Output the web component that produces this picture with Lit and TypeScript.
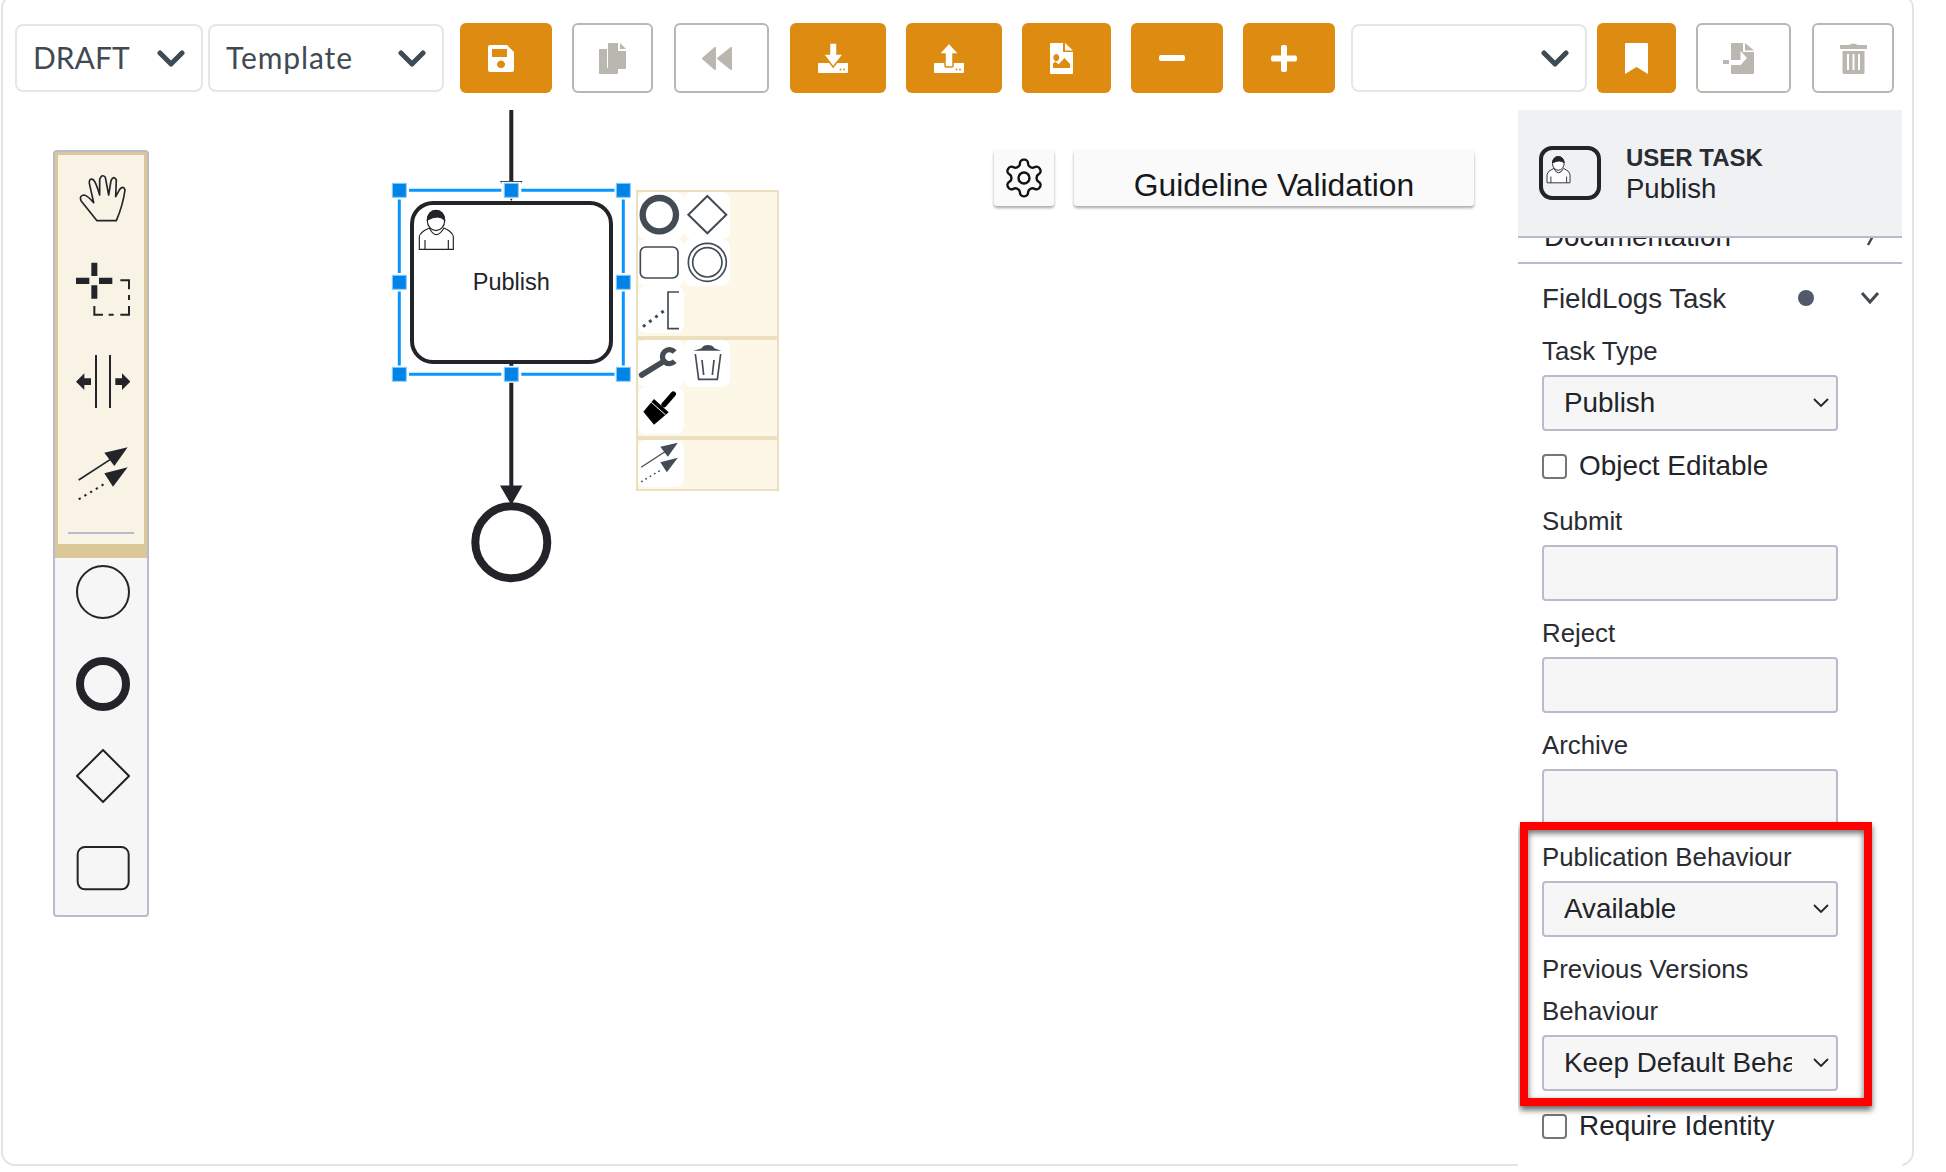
import { LitElement, html, svg, css } from 'lit';
import { customElement } from 'lit/decorators.js';

const userIcon = (sw: number) => svg`
  <g fill="none" stroke="#22242a" stroke-width=${sw}>
    <path fill="#fff" d="M118 448V410Q120 396 148 384Q168 424 192 384Q218 396 220 410V448Z" />
    <path d="M135 448V420M205 448V420" />
    <ellipse fill="#fff" cx="168" cy="362" rx="26" ry="30" />
    <path fill="#22242a" d="M142 360Q144 332 168 331Q192 332 194 360Q176 342 142 360Z" />
  </g>`;

const connectIcon = svg`
  <path d="M115 1020L215 955" stroke="currentColor" stroke-width="5" fill="none" />
  <path d="M262 922L192 938L222 978Z" fill="currentColor" />
  <path d="M115 1078L195 1030" stroke="currentColor" stroke-width="6" stroke-dasharray="7 13" fill="none" />
  <path d="M262 982L192 1000L218 1040Z" fill="currentColor" />`;

const chevron = html`<svg class="chev" width="28" height="18" viewBox="0 0 28 18"><path d="M3 3L14 14L25 3" /></svg>`;
const smallChev = html`<svg class="small-chev" width="16" height="10" viewBox="0 0 16 10"><path d="M1 1L8 8L15 1" /></svg>`;

const tray = svg`<path d="M1 20H30V29a1 1 0 0 1-1 1H1a1 1 0 0 1-1-1V21a1 1 0 0 1 1-1Z" /><circle cx="22.5" cy="26.5" r="1" class="hole" /><circle cx="26" cy="26.5" r="1" class="hole" />`;

const toolbarIcons: Record<string, unknown> = {
  save: html`<svg width="26" height="27" viewBox="0 0 26 27"><path fill-rule="evenodd" d="M2 0H19L26 7V25a2 2 0 0 1-2 2H2a2 2 0 0 1-2-2V2a2 2 0 0 1 2-2ZM4 4V12H19V4ZM13 15.5a4 3.8 0 1 0 .01 0Z" /></svg>`,
  copy: html`<svg width="27" height="31" viewBox="0 0 27 31"><path d="M1 6H8V24a1 1 0 0 0 1 1H19V30a1 1 0 0 1-1 1H1a1 1 0 0 1-1-1V7a1 1 0 0 1 1-1Z" /><path d="M10 0H19V8H27V25a1 1 0 0 1-1 1H10a1 1 0 0 1-1-1V1a1 1 0 0 1 1-1Z" /><path d="M21 0L27 6H21Z" /></svg>`,
  rewind: html`<svg width="30" height="23" viewBox="0 0 30 23"><path stroke-linejoin="round" stroke-width="2" stroke="currentColor" d="M1 11.5L13 1V22Z" /><path stroke-linejoin="round" stroke-width="2" stroke="currentColor" d="M16 11.5L29 1V22Z" /></svg>`,
  download: html`<svg width="30" height="30" viewBox="0 0 30 30">${tray}<path class="cut" d="M12 0H18.5a.5.5 0 0 1 .5.5V11H25.5L15.2 24L5.2 11H11.5V.5a.5.5 0 0 1 .5-.5Z" /></svg>`,
  upload: html`<svg width="30" height="30" viewBox="0 0 30 30">${tray}<path class="cut" d="M15 0L25 11H19V23a1 1 0 0 1-1 1H12a1 1 0 0 1-1-1V11H5Z" /></svg>`,
  image: html`<svg width="23" height="31" viewBox="0 0 23 31"><path fill-rule="evenodd" d="M1 0H13V9H23V30a1 1 0 0 1-1 1H1a1 1 0 0 1-1-1V1a1 1 0 0 1 1-1ZM6.3 11a3 3.6 0 1 0 .01 0ZM3 25V20.5L5.5 18.5L8.5 21.5L14.5 15L20 21V25Z" /><path d="M15 0L23 7.5H15Z" /></svg>`,
  minus: html`<svg width="26" height="6" viewBox="0 0 26 6"><rect width="26" height="6" rx="2" /></svg>`,
  plus: html`<svg width="26" height="27" viewBox="0 0 26 27"><rect y="10.5" width="26" height="6" rx="2" /><rect x="10" width="6" height="27" rx="2" /></svg>`,
  bookmark: html`<svg width="23" height="31" viewBox="0 0 23 31"><path d="M1 0H22a1 1 0 0 1 1 1V31L11.5 24L0 31V1a1 1 0 0 1 1-1Z" /></svg>`,
  import: html`<svg width="31" height="31" viewBox="0 0 31 31"><path fill-rule="evenodd" d="M9 0H20V9H31V30a1 1 0 0 1-1 1H9a1 1 0 0 1-1-1V22H17.5L24 15L17.5 8V17H8V1a1 1 0 0 1 1-1Z" /><path d="M22 0L31 7.5H22Z" /><path d="M0 17H6V21H0Z" /><path d="M8 17H17V21H8Z" fill="#fff" /></svg>`,
  trash: html`<svg width="27" height="31" viewBox="0 0 27 31"><path d="M9 2Q13 -1 18 2H27V6H0V2Z" /><path fill-rule="evenodd" d="M2.500 8H24.500V29.500a1.500 1.500 0 0 1-1.500 1.500H4a1.500 1.500 0 0 1-1.500-1.500ZM7 11V27H9V11ZM12.500 11V27H14.500V11ZM18 11V27H20V11Z" /></svg>`,
};

interface ToolItem {
  kind: 'select' | 'solid' | 'outline';
  width: number;
  gap: number;
  icon?: string;
  label?: string;
  nudge?: boolean;
}

const toolbar: ToolItem[] = [
  { kind: 'select', width: 188, gap: 15, label: 'DRAFT' },
  { kind: 'select', width: 236, gap: 5, label: 'Template' },
  { kind: 'solid', width: 92, gap: 16, icon: 'save', nudge: true },
  { kind: 'outline', width: 81, gap: 20, icon: 'copy' },
  { kind: 'outline', width: 95, gap: 21, icon: 'rewind', nudge: true },
  { kind: 'solid', width: 96, gap: 21, icon: 'download', nudge: true },
  { kind: 'solid', width: 96, gap: 20, icon: 'upload', nudge: true },
  { kind: 'solid', width: 89, gap: 20, icon: 'image', nudge: true },
  { kind: 'solid', width: 92, gap: 20, icon: 'minus', nudge: true },
  { kind: 'solid', width: 92, gap: 20, icon: 'plus', nudge: true },
  { kind: 'select', width: 236, gap: 16 },
  { kind: 'solid', width: 79, gap: 10, icon: 'bookmark' },
  { kind: 'outline', width: 95, gap: 20, icon: 'import', nudge: true },
  { kind: 'outline', width: 82, gap: 21, icon: 'trash' },
];

@customElement('app-root')
export class AppRoot extends LitElement {
  static styles = css`
    :host {
      display: block;
      width: 1946px;
      height: 1172px;
      overflow: hidden;
      background: #fff;
      font-family: 'Liberation Sans', Arial, sans-serif;
      color: #22242a;
    }
    .frame {
      box-sizing: border-box;
      width: 1913px;
      height: 1172px;
      margin: -6px 0 0 1px;
      border: 2px solid #e4e4e4;
      border-radius: 14px;
      display: flex;
      flex-direction: column;
    }
    .toolbar {
      height: 114px;
      display: flex;
      align-items: center;
      flex: none;
      padding-top: 10px;
      box-sizing: border-box;
      margin-left: -3px;
    }
    .tool-select {
      box-sizing: border-box;
      height: 68px;
      border: 2px solid #e6e6e6;
      border-radius: 8px;
      display: flex;
      align-items: center;
      justify-content: space-between;
      padding: 0 16px 0 16px;
      font-family: Lato, sans-serif;
      font-size: 30px;
      color: #3f4a52;
    }
    .tool-select span { padding-bottom: 2px; }
    .tool-select .tracked { letter-spacing: 0.9px; }
    .chev { margin-top: 2px; }
    .chev path {
      fill: none;
      stroke: #3f4a52;
      stroke-width: 5;
      stroke-linecap: round;
      stroke-linejoin: round;
    }
    .tool-btn {
      box-sizing: border-box;
      height: 70px;
      border-radius: 6px;
      display: flex;
      align-items: center;
      justify-content: center;
    }
    .tool-btn.nudge svg { margin-right: 10px; }
    .tool-btn.solid {
      background: #dd8b11;
      color: #fff;
    }
    .tool-btn.solid svg { fill: #fff; }
    .tool-btn.solid .hole { fill: #dd8b11; }
    .tool-btn.solid .cut { stroke: #dd8b11; stroke-width: 1.500; }
    .tool-btn.outline {
      border: 2px solid #bab7b0;
      color: #bab7b0;
      background: #fff;
    }
    .tool-btn.outline svg { fill: #bab7b0; }
    .main {
      flex: 1;
      display: flex;
      min-height: 0;
    }
    .canvas {
      position: relative;
      flex: 1;
    }
    .diagram {
      position: absolute;
      left: 0;
      top: 0;
    }
    .diagram-label {
      font-size: 23.500px;
      fill: #22242a;
    }
    .palette {
      position: absolute;
      left: 50px;
      top: 40px;
      box-sizing: border-box;
      width: 96px;
      border: 2px solid #b8bbcc;
      border-radius: 4px;
      background: #f6f6f6;
      color: #22242a;
    }
    .tools {
      background: #f9f3e6;
      border: solid #dcc896;
      border-width: 3px 3px 14px;
      padding-top: 15px;
      padding-bottom: 10px;
    }
    .shapes { padding: 7px 0 20px; }
    .entry {
      display: flex;
      justify-content: center;
      height: 54px;
      padding-left: 3px;
      margin-bottom: 38px;
    }
    .shapes .entry:last-child { margin-bottom: 0; }
    .tools .entry:nth-child(4) { margin-bottom: 32px; }
    .separator {
      height: 2px;
      margin: 0 10px;
      background: #b8bbcc;
    }
    .context-pad {
      position: absolute;
      left: 633px;
      top: 80px;
      width: 143px;
      color: #434c54;
    }
    .pad-group {
      box-sizing: border-box;
      border: 2px solid #ecdfbd;
      background: #fdf7e8;
      display: grid;
      grid-template-columns: 46px 46px;
      grid-auto-rows: 47px;
    }
    .pad-entry {
      background: #fff;
      border-radius: 8px;
    }
    .pad-entry svg { display: block; }
    .group-shapes { height: 148px; }
    .group-edit { height: 100px; }
    .group-connect { height: 53px; }
    .settings {
      position: absolute;
      left: 991px;
      top: 40px;
      display: flex;
      gap: 20px;
    }
    .settings > div {
      box-sizing: border-box;
      height: 56px;
      background: #fafafa;
      border-radius: 3px;
      box-shadow: 0 2px 3px rgba(0, 0, 0, 0.35);
    }
    .gear-btn {
      width: 60px;
      display: flex;
      align-items: center;
      justify-content: center;
    }
    .guideline {
      width: 400px;
      text-align: center;
      font-size: 31.800px;
      line-height: 71px;
      color: #16181c;
    }
    .panel {
      position: relative;
      z-index: 1;
      flex: none;
      width: 384px;
      height: 1057px;
      margin-right: 10px;
      background: #fff;
      overflow: hidden;
    }
    .panel-header {
      box-sizing: border-box;
      height: 128px;
      background: #f0f1f3;
      border-bottom: 2px solid #b8bbcc;
      display: flex;
      align-items: center;
      padding: 0 0 0 21px;
      gap: 25px;
    }
    .panel-title {
      font-size: 24px;
      font-weight: bold;
      line-height: 31px;
      color: #2a2c33;
    }
    .panel-name {
      font-size: 27.500px;
      line-height: 31px;
    }
    .clipped-row {
      box-sizing: border-box;
      height: 26px;
      border-bottom: 2px solid #b8bbcc;
      overflow: hidden;
      position: relative;
      font-size: 27.800px;
      line-height: 32px;
      padding-left: 26px;
    }
    .clipped-row span {
      display: block;
      margin-top: -17px;
    }
    .clipped-row svg {
      position: absolute;
      right: 26px;
      top: 0;
    }
    .group-head {
      height: 67px;
      display: flex;
      align-items: center;
      padding: 0 22px 0 24px;
      font-size: 27.700px;
      color: #2a2c33;
    }
    .group-head .title {
      flex: 1;
      padding-top: 3px;
    }
    .dot {
      width: 16px;
      height: 16px;
      border-radius: 50%;
      background: #52596a;
      margin-right: 46px;
    }
    .form {
      padding-left: 24px;
      width: 296px;
    }
    .field { margin-bottom: 12px; }
    .field.lead { margin-bottom: 14px; }
    .label {
      display: block;
      font-size: 25.800px;
      line-height: 42px;
      margin-top: -1px;
      margin-bottom: 3px;
      color: #2a2c33;
    }
    .input, .select {
      box-sizing: border-box;
      height: 56px;
      width: 296px;
      border: 2px solid #b8bbcc;
      border-radius: 4px;
      background: #f6f6f6;
    }
    .select {
      display: flex;
      align-items: center;
      padding-left: 20px;
      font-size: 27.800px;
      color: #22242a;
    }
    .select .value {
      width: 228px;
      overflow: hidden;
      white-space: nowrap;
      flex: none;
    }
    .small-chev {
      margin-left: 21px;
      flex: none;
    }
    .small-chev path {
      fill: none;
      stroke: #22242a;
      stroke-width: 1.800;
    }
    .check {
      display: flex;
      align-items: center;
      gap: 12px;
      height: 42px;
      font-size: 27.900px;
      margin-bottom: 14px;
    }
    .check i {
      box-sizing: border-box;
      width: 25px;
      height: 25px;
      flex: none;
      border: 2px solid #767676;
      border-radius: 4px;
      background: #fff;
    }
    .callout {
      position: absolute;
      left: 2px;
      top: 712px;
      box-sizing: border-box;
      width: 352px;
      height: 284px;
      border: 8px solid #ff0000;
      box-shadow: 0 4px 6px rgba(0, 0, 0, 0.6), inset 0 3px 6px rgba(0, 0, 0, 0.6);
      pointer-events: none;
    }
  `;

  private renderTool(item: ToolItem) {
    const spacing = `width:${item.width}px;margin-left:${item.gap}px;flex:none`;
    if (item.kind === 'select') {
      return html`<div class="tool-select" style=${spacing}>
        <span class=${item.label === 'Template' ? 'tracked' : ''}>${item.label ?? ''}</span>${chevron}
      </div>`;
    }
    return html`<div class="tool-btn ${item.kind} ${item.nudge ? 'nudge' : ''}" style=${spacing}>${toolbarIcons[item.icon!]}</div>`;
  }

  private renderPalette() {
    const box = (y: number, body: unknown) => html`
      <div class="entry"><svg width="54" height="54" viewBox="107 ${y} 162 162">${body}</svg></div>`;
    return html`
      <div class="palette">
        <div class="tools">
          ${box(90, svg`<path fill="none" stroke="#22242a" stroke-width="5" stroke-linejoin="round" stroke-linecap="round" d="M170 242L122 182Q116 168 130 165Q140 165 160 188L147 130Q146 115 157 118Q165 120 178 165L178 118Q185 100 195 112L205 165L212 122Q220 105 228 120L226 170L238 148Q250 135 254 150Q248 195 228 242Z" />`)}
          ${box(366, svg`
            <path fill="#22242a" d="M153 368H171V408H153ZM153 436H171V476H153ZM107 413H147V432H107ZM176 413H216V432H176Z" />
            <path fill="none" stroke="#22242a" stroke-width="6" d="M240 421H266V448M266 465V480M266 498V524H240M220 524H205M188 524H162V498" />`)}
          ${box(642, svg`
            <path stroke="#22242a" stroke-width="6" d="M167 645V805M209 645V805" />
            <path fill="#22242a" d="M107 725L132 700V715H152V735H132V750ZM270 725L245 700V715H225V735H245V750Z" />`)}
          ${box(918, connectIcon)}
          <div class="separator"></div>
        </div>
        <div class="shapes">
          ${box(74, svg`<circle cx="188" cy="155" r="78" fill="none" stroke="#22242a" stroke-width="6" />`)}
          ${box(350, svg`<circle cx="188" cy="431" r="69" fill="none" stroke="#22242a" stroke-width="24" />`)}
          ${box(627, svg`<path d="M188 630L266 708L188 786L110 708Z" fill="none" stroke="#22242a" stroke-width="6" />`)}
          ${box(902, svg`<rect x="112" y="920" width="153" height="127" rx="22" fill="none" stroke="#22242a" stroke-width="6" />`)}
        </div>
      </div>`;
  }

  private renderPad() {
    const entry = (x: number, y: number, body: unknown) => html`
      <div class="pad-entry"><svg width="46" height="47" viewBox="${x} ${y} 138 141">${body}</svg></div>`;
    const c = 'currentColor';
    return html`
      <div class="context-pad">
        <div class="pad-group group-shapes">
          ${entry(774, 276, svg`<circle cx="838" cy="344" r="50" fill="none" stroke=${c} stroke-width="19" />`)}
          ${entry(912, 276, svg`<path d="M982 288L1039 344L982 400L925 344Z" fill="none" stroke=${c} stroke-width="6" />`)}
          ${entry(774, 417, svg`<rect x="781" y="441" width="113" height="93" rx="16" fill="none" stroke=${c} stroke-width="5" />`)}
          ${entry(912, 417, svg`<circle cx="982" cy="487" r="57" fill="none" stroke=${c} stroke-width="5" /><circle cx="982" cy="487" r="44" fill="none" stroke=${c} stroke-width="5" />`)}
          ${entry(774, 558, svg`<path d="M789 680L855 630" fill="none" stroke=${c} stroke-width="9" stroke-dasharray="9 14" /><path d="M897 576H864V686H897" fill="none" stroke=${c} stroke-width="5" />`)}
        </div>
        <div class="pad-group group-edit">
          ${entry(774, 720, svg`<path d="M785 825L850 785" stroke=${c} stroke-width="17" stroke-linecap="round" /><path d="M884 756A21 21 0 1 0 884 784" fill="none" stroke=${c} stroke-width="16" />`)}
          ${entry(912, 720, svg`<path d="M965 745Q970 735 983 735Q998 735 1003 745L1024 752H940Z" fill=${c} /><path d="M946 762L956 838H1012L1022 762M966 780L971 825M1002 780L997 825" fill="none" stroke=${c} stroke-width="5" />`)}
          ${entry(774, 861, svg`<g transform="translate(0 690)"><path d="M880 192L852 224" stroke="#000" stroke-width="16" stroke-linecap="round" /><path d="M790 245L822 207L866 247L822 284Z" fill="#000" /><path d="M814 217L856 254" stroke="#fff" stroke-width="3" /></g>`)}
        </div>
        <div class="pad-group group-connect">
          ${entry(774, 330, svg`<g transform="translate(697 -353) scale(.75)">${connectIcon}</g>`)}
        </div>
      </div>`;
  }

  private renderDiagram() {
    const ln = '#22242a';
    const xs = [399.3, 511.3, 623.3];
    const ys = [190.3, 282.3, 374.3];
    const handles = xs.flatMap((x) =>
      ys.filter((y) => !(x === 511.3 && y === 282.3)).map((y) => [x, y])
    );
    return html`
      <svg class="diagram" width="1515" height="1054" viewBox="3 110 1515 1054">
        <path d="M511.300 110V184M511.300 364V490" stroke=${ln} stroke-width="4" fill="none" />
        <path d="M500 181H522.500L511.300 201Z" fill=${ln} />
        <path d="M500 485.500H522.500L511.300 505Z" fill=${ln} />
        <circle cx="511.300" cy="542.300" r="36" fill="#fff" stroke=${ln} stroke-width="8" />
        <rect x="412" y="203" width="199" height="159" rx="21" fill="#fff" stroke=${ln} stroke-width="4" />
        <g transform="translate(380 100) scale(.3333)">${userIcon(3.500)}</g>
        <text class="diagram-label" x="511.300" y="289.500" text-anchor="middle">Publish</text>
        <path fill="none" stroke="#0a96ff" stroke-width="3" d="M409 190.300H502.500M521 190.300H614.500M409 374.300H502.500M521 374.300H614.500M399.300 199.500V273M399.300 291.500V365.500M623.300 199.500V273M623.300 291.500V365.500" />
        <g>
          ${[[511.3, 190.3], [511.3, 374.3]].map(
            ([x, y]) => svg`<rect x=${x - 10} y=${y - 8.5} width="20" height="17" fill="#fff" />`
          )}
          ${handles.map(
            ([x, y]) => svg`<rect x=${x - 7} y=${y - 7} width="14" height="14" fill="#0084e8" stroke="#8ecbff" stroke-width="1" />`
          )}
        </g>
      </svg>`;
  }

  render() {
    return html`
      <div class="frame">
        <div class="toolbar">${toolbar.map((item) => this.renderTool(item))}</div>
        <div class="main">
          <div class="canvas">
            ${this.renderDiagram()} ${this.renderPalette()} ${this.renderPad()}
            <div class="settings">
              <div class="gear-btn">
                <svg width="44" height="44" viewBox="0 0 24 24" fill="none" stroke="#111" stroke-width="1.300" stroke-linejoin="round">
                  <path d="M12.220 2h-.44a2 2 0 0 0-2 2v.18a2 2 0 0 1-1 1.730l-.43.25a2 2 0 0 1-2 0l-.15-.08a2 2 0 0 0-2.730.73l-.22.38a2 2 0 0 0 .73 2.730l.15.1a2 2 0 0 1 1 1.720v.51a2 2 0 0 1-1 1.740l-.15.09a2 2 0 0 0-.73 2.730l.22.38a2 2 0 0 0 2.730.73l.15-.08a2 2 0 0 1 2 0l.43.25a2 2 0 0 1 1 1.730V20a2 2 0 0 0 2 2h.44a2 2 0 0 0 2-2v-.18a2 2 0 0 1 1-1.730l.43-.25a2 2 0 0 1 2 0l.15.08a2 2 0 0 0 2.730-.73l.22-.39a2 2 0 0 0-.73-2.730l-.15-.08a2 2 0 0 1-1-1.740v-.5a2 2 0 0 1 1-1.740l.15-.09a2 2 0 0 0 .73-2.730l-.22-.38a2 2 0 0 0-2.730-.73l-.15.08a2 2 0 0 1-2 0l-.43-.25a2 2 0 0 1-1-1.730V4a2 2 0 0 0-2-2z" />
                  <circle cx="12" cy="12" r="3" />
                </svg>
              </div>
              <div class="guideline">Guideline Validation</div>
            </div>
          </div>
          <div class="panel">
            <div class="panel-header">
              <svg width="62" height="54" viewBox="0 0 62 54">
                <rect x="2" y="2" width="58" height="50" rx="11" fill="none" stroke="#22242a" stroke-width="4" />
                <g transform="translate(-18.500 -64) scale(.225)">${userIcon(4)}</g>
              </svg>
              <div>
                <div class="panel-title">USER TASK</div>
                <div class="panel-name">Publish</div>
              </div>
            </div>
            <div class="clipped-row">
              <span>Documentation</span>
              <svg width="12" height="10" viewBox="0 0 12 10"><path d="M9 -2L4 7" stroke="#3f4a52" stroke-width="2.500" fill="none" /></svg>
            </div>
            <div class="group-head">
              <span class="title">FieldLogs Task</span>
              <span class="dot"></span>
              <svg width="20" height="14" viewBox="0 0 20 14"><path d="M2 2L10 11L18 2" fill="none" stroke="#3f4a52" stroke-width="3" /></svg>
            </div>
            <div class="form">
              <div class="field lead">
                <div class="label">Task Type</div>
                <div class="select"><span class="value">Publish</span>${smallChev}</div>
              </div>
              <div class="check"><i></i>Object Editable</div>
              <div class="field"><div class="label">Submit</div><div class="input"></div></div>
              <div class="field"><div class="label">Reject</div><div class="input"></div></div>
              <div class="field"><div class="label">Archive</div><div class="input"></div></div>
              <div class="field">
                <div class="label">Publication Behaviour</div>
                <div class="select"><span class="value">Available</span>${smallChev}</div>
              </div>
              <div class="field lead">
                <div class="label">Previous Versions Behaviour</div>
                <div class="select"><span class="value">Keep Default Behaviour</span>${smallChev}</div>
              </div>
              <div class="check"><i></i>Require Identity</div>
            </div>
            <div class="callout"></div>
          </div>
        </div>
      </div>
    `;
  }
}
